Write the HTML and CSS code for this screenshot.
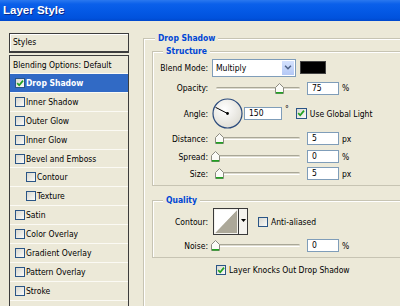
FILE: index.html
```html
<!DOCTYPE html>
<html lang="en">
<head>
  <meta charset="UTF-8">
  <title>Layer Style</title>
  <link rel="stylesheet" href="styles.css">
</head>
<body>
  <div class="titlebar">Layer Style</div>

  <div class="dialog">
    <div class="sidebar">
      <div class="styles-head">Styles</div>
      <ul class="style-list">
        <li class="plain">Blending Options: Default</li>
        <li class="active"><span class="cb checked"><svg viewBox="0 0 8 8"><path d="M1.2 4.2 L3.2 6.3 L7 1.6" /></svg></span>Drop Shadow</li>
        <li><span class="cb"></span>Inner Shadow</li>
        <li><span class="cb"></span>Outer Glow</li>
        <li><span class="cb"></span>Inner Glow</li>
        <li><span class="cb"></span>Bevel and Emboss</li>
        <li class="sub"><span class="cb"></span>Contour</li>
        <li class="sub"><span class="cb"></span>Texture</li>
        <li><span class="cb"></span>Satin</li>
        <li><span class="cb"></span>Color Overlay</li>
        <li><span class="cb"></span>Gradient Overlay</li>
        <li><span class="cb"></span>Pattern Overlay</li>
        <li><span class="cb"></span>Stroke</li>
      </ul>
    </div>

    <div class="main">
      <div class="group outer">
        <span class="group-title">Drop Shadow</span>

        <div class="group structure">
          <span class="group-title">Structure</span>

          <div class="row row-blend">
            <span class="lbl">Blend Mode:</span>
            <div class="select">
              <span class="select-value">Multiply</span>
              <span class="select-btn"><svg viewBox="0 0 9 6"><path d="M1 1 L4.5 4.5 L8 1" /></svg></span>
            </div>
            <span class="swatch"></span>
          </div>

          <div class="row row-opacity">
            <span class="lbl">Opacity:</span>
            <div class="slider">
              <span class="track"></span>
              <span class="thumb" style="left: 63.5px"><svg viewBox="0 0 9 11"><path d="M0.5 4.5 L4.5 0.5 L8.5 4.5 V10.5 H0.5 Z" /><path class="foot" d="M1 9.8 H8" /></svg></span>
            </div>
            <span class="num">75</span>
            <span class="unit">%</span>
          </div>

          <div class="row row-angle">
            <span class="lbl">Angle:</span>
            <svg class="dial" viewBox="0 0 31 31">
              <defs>
                <radialGradient id="dialFill" cx="0.4" cy="0.35" r="0.7">
                  <stop offset="0" stop-color="#ffffff" />
                  <stop offset="1" stop-color="#dedcd3" />
                </radialGradient>
              </defs>
              <circle cx="15.5" cy="15.5" r="14.5" fill="url(#dialFill)" stroke="#2a4a7c" stroke-width="1.2" />
              <line x1="15.5" y1="15.5" x2="3.5" y2="9.3" stroke="#000" stroke-width="1" />
              <circle cx="15.5" cy="15.5" r="1.4" fill="#000" />
            </svg>
            <span class="num num-wide">150</span>
            <span class="deg">°</span>
            <span class="cb checked global"><svg viewBox="0 0 8 8"><path d="M1.2 4.2 L3.2 6.3 L7 1.6" /></svg></span>
            <span class="cb-text">Use Global Light</span>
          </div>

          <div class="row row-distance">
            <span class="lbl">Distance:</span>
            <div class="slider">
              <span class="track"></span>
              <span class="thumb" style="left: 4px"><svg viewBox="0 0 9 11"><path d="M0.5 4.5 L4.5 0.5 L8.5 4.5 V10.5 H0.5 Z" /><path class="foot" d="M1 9.8 H8" /></svg></span>
            </div>
            <span class="num">5</span>
            <span class="unit">px</span>
          </div>

          <div class="row row-spread">
            <span class="lbl">Spread:</span>
            <div class="slider">
              <span class="track"></span>
              <span class="thumb" style="left: 0px"><svg viewBox="0 0 9 11"><path d="M0.5 4.5 L4.5 0.5 L8.5 4.5 V10.5 H0.5 Z" /><path class="foot" d="M1 9.8 H8" /></svg></span>
            </div>
            <span class="num">0</span>
            <span class="unit">%</span>
          </div>

          <div class="row row-size">
            <span class="lbl">Size:</span>
            <div class="slider">
              <span class="track"></span>
              <span class="thumb" style="left: 4px"><svg viewBox="0 0 9 11"><path d="M0.5 4.5 L4.5 0.5 L8.5 4.5 V10.5 H0.5 Z" /><path class="foot" d="M1 9.8 H8" /></svg></span>
            </div>
            <span class="num">5</span>
            <span class="unit">px</span>
          </div>
        </div>

        <div class="group quality">
          <span class="group-title">Quality</span>

          <div class="row row-contour">
            <span class="lbl">Contour:</span>
            <svg class="contour" viewBox="0 0 35 27">
              <rect x="0.5" y="0.5" width="34" height="26" fill="#f4f3ee" stroke="#3a3a3a" />
              <path d="M2 25 L24 2 L24 25 Z" fill="#aca899" />
              <path d="M2 2 H24 L2 25 Z" fill="#ffffff" />
              <line x1="25.5" y1="1" x2="25.5" y2="26" stroke="#3a3a3a" />
              <path d="M28 11 H33 L30.5 14 Z" fill="#000" />
            </svg>
            <span class="cb aa"></span>
            <span class="cb-text">Anti-aliased</span>
          </div>

          <div class="row row-noise">
            <span class="lbl">Noise:</span>
            <div class="slider">
              <span class="track"></span>
              <span class="thumb" style="left: 0px"><svg viewBox="0 0 9 11"><path d="M0.5 4.5 L4.5 0.5 L8.5 4.5 V10.5 H0.5 Z" /><path class="foot" d="M1 9.8 H8" /></svg></span>
            </div>
            <span class="num">0</span>
            <span class="unit">%</span>
          </div>
        </div>

        <div class="row knock">
          <span class="cb checked"><svg viewBox="0 0 8 8"><path d="M1.2 4.2 L3.2 6.3 L7 1.6" /></svg></span>
          <span class="cb-text">Layer Knocks Out Drop Shadow</span>
        </div>
      </div>
    </div>
  </div>
</body>
</html>
```

FILE: styles.css
```css
* {
  box-sizing: border-box;
}

body {
  margin: 0;
  width: 400px;
  height: 306px;
  overflow: hidden;
  background: #ece9d8;
  font-family: "DejaVu Sans Condensed", "DejaVu Sans", sans-serif;
  font-size: 8.5px;
  color: #000;
}

.titlebar {
  height: 22px;
  padding-left: 3px;
  line-height: 21px;
  color: #fff;
  font-family: "Liberation Sans", Arial, sans-serif;
  font-size: 11.5px;
  font-weight: bold;
  text-shadow: 1px 1px 0 #0a2a8c;
  background: linear-gradient(#2a78ef 0, #0b60ea 4px, #0459e5 11px, #0152dd 18px, #0048cc 21px, #ece9d8 21px);
}

.dialog {
  display: flex;
  height: 284px;
  padding-top: 11px;
}

/* left list */
.sidebar {
  flex: none;
  display: flex;
  flex-direction: column;
  width: 120px;
  margin-left: 9px;
}

.styles-head {
  height: 20px;
  padding-left: 3px;
  line-height: 17px;
  border: 1px solid #3c3c3c;
  border-bottom-width: 2px;
  box-shadow: inset 1px 1px #fff;
}

.style-list {
  flex: 1;
  list-style: none;
  margin: 2px 0 0;
  padding: 0;
  overflow: hidden;
  border: 1px solid #3c3c3c;
  border-bottom: none;
}

.style-list li {
  display: flex;
  align-items: center;
  height: 18.9px;
  padding-left: 5px;
  white-space: nowrap;
  border-bottom: 1px solid #fbfaf4;
}

.style-list li.plain {
  height: 18px;
  padding-left: 3px;
}

.style-list li.sub {
  padding-left: 16px;
}

.style-list li.active {
  background: #316ac5;
  color: #fff;
  font-weight: bold;
}

.cb {
  flex: none;
  display: inline-flex;
  width: 10px;
  height: 10px;
  margin-right: 1px;
  border: 1px solid #2a5586;
  background: linear-gradient(135deg, #d8d8d0, #fafaf8);
}

.cb svg {
  width: 8px;
  height: 8px;
}

.cb svg path {
  fill: none;
  stroke: #21a121;
  stroke-width: 1.7;
}

/* right panel, cut off by the window on the right */
.main {
  flex: 1;
  min-width: 0;
  margin-left: 14px;
}

.group {
  position: relative;
  border: 1px solid #c7c4b3;
  border-right: none;
  box-shadow: inset 1px 1px #fff;
}

.group-title {
  position: absolute;
  top: -6px;
  left: 10px;
  padding: 0 3px;
  line-height: 11px;
  background: #ece9d8;
  color: #0046d5;
  font-weight: bold;
}

.outer {
  height: 268px;
  margin-top: 5px;
  padding: 12px 0 0 8px;
  border-bottom: none;
}

.outer > .group-title {
  left: 11px;
}

.structure {
  padding: 5px 0 4px;
}

.quality {
  margin-top: 14px;
  padding: 7px 0 4px;
}

.row {
  display: flex;
  align-items: center;
  white-space: nowrap;
}

.lbl {
  flex: none;
  width: 55px;
  text-align: right;
}

.row-blend { height: 21px; }
.row-opacity { height: 16px; margin-top: 2px; }
.row-angle { height: 31px; margin-top: 2px; }
.row-distance { height: 15px; margin-top: 2px; }
.row-spread { height: 15px; margin-top: 3px; }
.row-size { height: 15px; margin-top: 2px; }
.row-contour { height: 27px; }
.row-noise { height: 15px; margin-top: 3px; }

.select {
  flex: none;
  display: flex;
  width: 84px;
  height: 18px;
  margin-left: 4px;
  border: 1px solid #7f9db9;
  background: #fff;
}

.select-value {
  flex: 1;
  padding-left: 3px;
  line-height: 16px;
}

.select-btn {
  display: flex;
  align-items: center;
  justify-content: center;
  width: 14px;
  border: 1px solid #fff;
  background: linear-gradient(#d5e2fd, #b4c8f5);
}

.select-btn svg {
  width: 8px;
  height: 5px;
}

.select-btn path {
  fill: none;
  stroke: #4d6185;
  stroke-width: 1.8;
}

.swatch {
  flex: none;
  width: 26px;
  height: 13px;
  margin-left: 4px;
  background: #000;
  border: 1px solid #444;
}

.slider {
  position: relative;
  flex: none;
  width: 94px;
  height: 15px;
  margin-left: 3px;
}

.track {
  position: absolute;
  left: 5px;
  right: 5px;
  top: 6px;
  height: 3px;
  border-radius: 2px;
  background: #dcdacd;
  border-top: 1px solid #a9a797;
  border-bottom: 1px solid #fff;
}

.thumb {
  position: absolute;
  top: 2px;
  width: 9px;
  height: 11px;
}

.thumb svg {
  display: block;
  width: 9px;
  height: 11px;
}

.thumb path {
  fill: #fbfbf7;
  stroke: #8b8a80;
  stroke-width: 1;
}

.thumb path.foot {
  fill: none;
  stroke: #21a121;
  stroke-width: 1.6;
}

.num {
  flex: none;
  width: 32px;
  height: 13px;
  margin-left: 2px;
  padding-left: 4px;
  line-height: 11px;
  border: 1px solid #7f9db9;
  background: #fff;
}

.unit {
  margin-left: 3px;
}

.dial {
  flex: none;
  width: 31px;
  height: 31px;
  margin-left: 4px;
}

.num-wide {
  width: 38px;
  margin-left: 1px;
}

.deg {
  margin-left: 3px;
  align-self: flex-start;
  margin-top: 6px;
}

.global {
  margin-left: 7px;
  width: 11px;
  height: 11px;
}

.cb-text {
  margin-left: 2px;
}

.contour {
  flex: none;
  width: 35px;
  height: 27px;
  margin-left: 5px;
}

.aa {
  margin-left: 10px;
}

.knock {
  height: 12px;
  margin-top: 6px;
  padding-left: 64px;
}
```
